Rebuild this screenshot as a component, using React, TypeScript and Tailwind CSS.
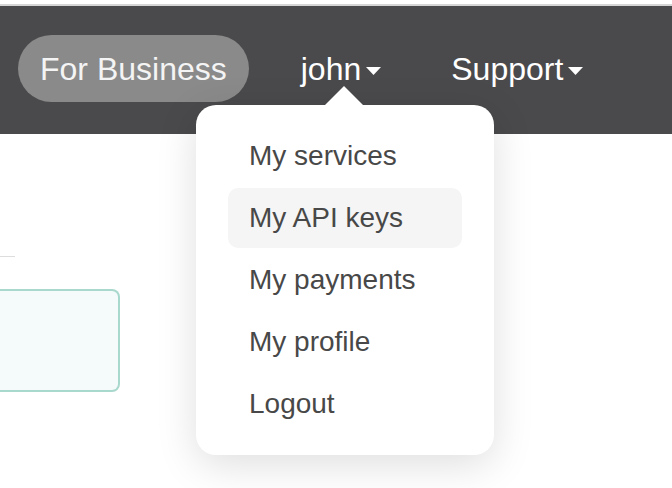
import React from 'react';

const menuItems = ['My services', 'My API keys', 'My payments', 'My profile', 'Logout'];

function Caret() {
  return (
    <svg width="15" height="8" viewBox="0 0 15 8" className="ml-[5px] mt-[4px]">
      <path d="M0 0 L15 0 L7.5 8 Z" fill="#ffffff" />
    </svg>
  );
}

export default function App() {
  return (
    <div
      className="relative h-[488px] w-[672px] overflow-hidden bg-white"
      style={{ fontFamily: '"Liberation Sans", Arial, sans-serif' }}
    >
      <div className="h-[6px] border-b-2 border-[#d6d6d6] bg-white" />
      <nav className="flex h-[128px] items-start bg-[#4a4a4c] pl-[18px] pt-[29px] text-[32px] text-white">
        <div className="flex h-[67px] items-center rounded-full bg-[#8a8a8a] px-[22px] text-[#f4f4f4]">
          For Business
        </div>
        <div className="ml-[52px] flex h-[67px] items-center">
          john
          <Caret />
        </div>
        <div className="ml-[70px] flex h-[67px] items-center">
          Support
          <Caret />
        </div>
      </nav>

      <div className="px-0 pt-[122px]">
        <div className="h-px w-[15px] bg-[#dddddd]" />
        <div className="mt-[32px] h-[103px] w-[120px] rounded-r-[8px] border-2 border-l-0 border-[#a9d8cd] bg-[#f5fbfa]" />
      </div>

      <div className="absolute left-[196px] top-[105px] w-[298px] rounded-[20px] bg-white px-[32px] py-[21px] shadow-[0_10px_40px_rgba(0,0,0,0.13)]">
        <svg
          width="40"
          height="20"
          viewBox="0 0 40 20"
          className="absolute left-[128px] top-[-19px]"
        >
          <path d="M0 20 L20 0 L40 20 Z" fill="#ffffff" />
        </svg>
        <ul className="flex flex-col gap-[2px]">
          {menuItems.map((item) => (
            <li
              key={item}
              className={
                'flex h-[60px] items-center rounded-[10px] px-[21px] text-[28px] text-[#484848] ' +
                (item === 'My API keys' ? 'bg-[#f5f5f5]' : '')
              }
            >
              {item}
            </li>
          ))}
        </ul>
      </div>
    </div>
  );
}
